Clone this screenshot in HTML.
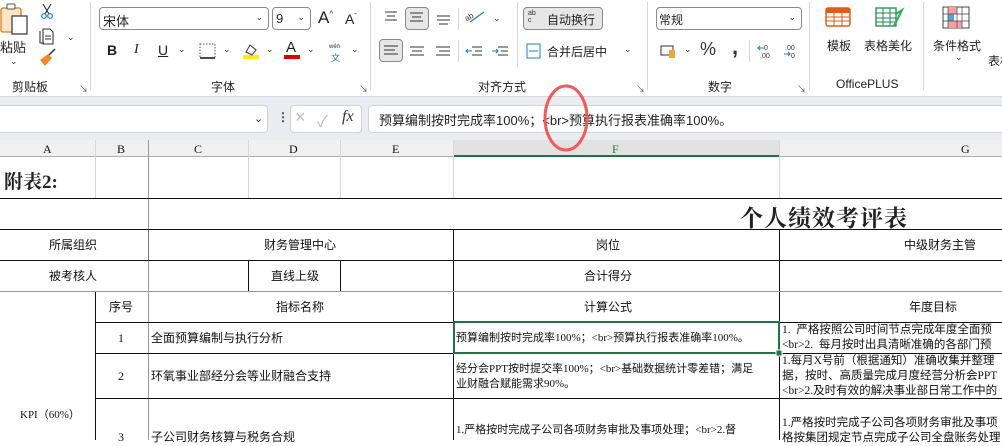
<!DOCTYPE html>
<html><head><meta charset="utf-8"><style>
*{margin:0;padding:0;box-sizing:border-box}
body{width:1002px;height:440px;overflow:hidden;background:#fff;position:relative;font-family:"Liberation Sans","Noto Sans CJK SC",sans-serif;color:#222}
.a{position:absolute;white-space:nowrap}
.ui{font-size:12px;color:#222}
.c{font-family:"Liberation Serif","Noto Sans CJK SC",sans-serif;font-size:12px;color:#111;line-height:14px}
.box{position:absolute;border:1px solid #8a8a8a;border-radius:4px;background:#fff}
.pr{position:absolute;border:1px solid #8a8a8a;border-radius:4px;background:#e6e6e6}
.sep{position:absolute;width:1px;background:#d8d8d8}
.chev{position:absolute;font-size:9px;color:#333}
</style></head><body>
<!-- ribbon -->
<div class="a" style="left:0;top:0;width:1002px;height:96px;background:#fff"></div>
<svg class="a" style="left:0;top:0" width="1002" height="96">
 <!-- paste -->
 <rect x="1" y="8" width="20" height="24" rx="2" fill="#fbe6c8" stroke="#e07b1a" stroke-width="1.3"/>
 <rect x="7" y="4" width="8" height="5" rx="1" fill="#fff" stroke="#555"/>
 <rect x="12" y="16" width="15" height="18" fill="#fff" stroke="#333" stroke-width="1.2"/>
 <!-- scissors -->
 <path d="M43 4 L49 14 M51 4 L45 14" stroke="#333" stroke-width="1.2" fill="none"/>
 <circle cx="44" cy="16" r="2.3" fill="none" stroke="#1a7fd0" stroke-width="1.2"/><circle cx="50" cy="16" r="2.3" fill="none" stroke="#1a7fd0" stroke-width="1.2"/>
 <!-- copy -->
 <path d="M40 31 V43 H44 M43 29 H50 L53 32 V44 H43 Z" stroke="#333" stroke-width="1.1" fill="none"/>
 <path d="M45 36 H51 M45 39 H51" stroke="#333"/>
 <!-- brush -->
 <path d="M40 60 L48 54 L52 58 L45 66 Z" fill="#f08a24"/><path d="M49 55 L55 49" stroke="#333" stroke-width="1.5"/>
 <!-- font group -->
 <path d="M200 44 H215 V58 H200 Z" stroke="#555" stroke-dasharray="1.5 1.5" fill="none"/><path d="M200 58 H215" stroke="#111" stroke-width="1.5"/>
 <rect x="243" y="55" width="16" height="4" fill="#ffee00"/>
 <path d="M246 52 L250 45 L256 50 L252 55 Z" fill="none" stroke="#333"/>
 <rect x="284" y="55" width="16" height="4" fill="#e00000"/>
 <!-- align icons row1 -->
 <g stroke="#333" stroke-width="1">
 <path d="M385 12 H397 M387 16 H395 M385 20 H397"/>
 <path d="M410 15 H423 M412 19 H421 M410 23 H423"/>
 <path d="M437 22 H450 M439 26 H448 M437 18 H450" transform="translate(0,-2)"/>
 <path d="M384 47 H398 M384 51 H395 M384 55 H398"/>
 <path d="M410 47 H424 M412 51 H422 M410 55 H424"/>
 <path d="M436 47 H450 M439 51 H450 M436 55 H450"/>
 <path d="M472 47 H482 M475 51 H482 M472 55 H482"/><path d="M498 47 H508 M501 51 H508 M498 55 H508"/>
 </g>
 <path d="M466 51 H472 M468 49 L466 51 L468 53" stroke="#1a7fd0" fill="none"/>
 <path d="M492 51 H498 M496 49 L498 51 L496 53" stroke="#1a7fd0" fill="none"/>
 <path d="M470 22 L484 12" stroke="#1a7fd0" stroke-width="1.3"/>
 <text x="464" y="20" font-size="8" fill="#333" transform="rotate(-30 468 16)">ab</text>
 <rect x="527" y="44" width="13" height="14" fill="none" stroke="#1a7fd0"/><path d="M529 51 H538" stroke="#1a7fd0"/>
 <!-- number icons -->
 <rect x="661" y="46" width="12" height="9" fill="none" stroke="#333"/><rect x="669" y="50" width="6" height="8" fill="#f3a33a"/>
 <path d="M758 48 H764 M760 46 L758 48 L760 50" stroke="#1a7fd0" fill="none"/>
 <path d="M784 54 H790 M788 52 L790 54 L788 56" stroke="#1a7fd0" fill="none"/>
 <text x="764" y="50" font-size="7" fill="#333">0</text><text x="760" y="58" font-size="7" fill="#333">.00</text>
 <text x="785" y="50" font-size="7" fill="#333">.00</text><text x="791" y="58" font-size="7" fill="#333">0</text>
 <!-- officeplus icons -->
 <rect x="826" y="8" width="24" height="18" rx="2" fill="#fff" stroke="#e35b1c" stroke-width="1.5"/><rect x="826" y="8" width="24" height="5" fill="#e35b1c"/>
 <path d="M826 17 H850 M826 21 H850 M834 13 V26 M842 13 V26" stroke="#e35b1c"/>
 <rect x="876" y="8" width="20" height="18" fill="#fff" stroke="#1e8a4c" stroke-width="1.3"/>
 <path d="M876 13 H896 M876 18 H896 M876 22 H896 M883 8 V26 M890 8 V26" stroke="#1e8a4c"/><path d="M896 14 L902 10 L894 26" stroke="#2fae5c" stroke-width="2" fill="none"/>
 <rect x="943" y="7" width="26" height="21" fill="#fff" stroke="#444"/>
 <rect x="948" y="7" width="9" height="7" fill="#f5a0a0"/><rect x="948" y="14" width="6" height="7" fill="#5aa0e0"/><rect x="948" y="21" width="14" height="7" fill="#f5a0a0"/>
 <path d="M943 14 H969 M943 21 H969 M948 7 V28 M957 7 V28 M962 7 V28" stroke="#444" stroke-width=".7"/>
</svg>
<div class="a ui" style="left:0;top:37px;font-size:13px">粘贴</div>
<div class="chev" style="left:10px;top:56px">⌄</div>
<div class="chev" style="left:67px;top:32px">⌄</div>
<div class="a ui" style="left:12px;top:78px;font-size:12px">剪贴板</div>
<div class="a" style="left:79px;top:82px;font-size:9px;color:#555">↘</div>
<div class="sep" style="left:90px;top:2px;height:88px"></div>
<div class="box" style="left:99px;top:7px;width:170px;height:23px"><span class="a ui" style="left:3px;top:3px;font-size:13px">宋体</span><span class="chev" style="right:5px;top:4px">⌄</span></div>
<div class="box" style="left:272px;top:7px;width:39px;height:23px"><span class="a ui" style="left:3px;top:3px;font-size:13px">9</span><span class="chev" style="right:5px;top:4px">⌄</span></div>
<div class="a ui" style="left:318px;top:8px;font-size:17px">A<sup style="font-size:8px">^</sup></div>
<div class="a ui" style="left:345px;top:11px;font-size:14px">A<sup style="font-size:7px">ˇ</sup></div>
<div class="a" style="left:107px;top:42px;font-size:14px;font-weight:bold">B</div>
<div class="a" style="left:134px;top:42px;font-size:14px;font-style:italic;font-family:'Liberation Serif'">I</div>
<div class="a" style="left:158px;top:42px;font-size:14px;text-decoration:underline">U</div>
<div class="chev" style="left:178px;top:44px">⌄</div><div class="chev" style="left:223px;top:44px">⌄</div>
<div class="chev" style="left:266px;top:44px">⌄</div><div class="chev" style="left:307px;top:44px">⌄</div><div class="chev" style="left:351px;top:44px">⌄</div>
<div class="a" style="left:286px;top:39px;font-size:15px">A</div>
<div class="a" style="left:329px;top:44px;font-size:6px;color:#333">wén</div><div class="a" style="left:331px;top:51px;font-size:9px;color:#1a7fd0">文</div>
<div class="a ui" style="left:211px;top:78px">字体</div>
<div class="a" style="left:359px;top:82px;font-size:9px;color:#555">↘</div>
<div class="sep" style="left:370px;top:2px;height:88px"></div>
<div class="pr" style="left:405px;top:7px;width:24px;height:23px"></div>
<div class="pr" style="left:379px;top:39px;width:24px;height:23px"></div>
<svg class="a" style="left:0;top:0" width="1002" height="96" pointer-events="none"><g stroke="#333"><path d="M410 13 H423 M412 17 H421 M410 21 H423"/><path d="M384 46 H398 M384 50 H395 M384 54 H398"/></g></svg>
<div class="chev" style="left:493px;top:13px">⌄</div>
<div class="sep" style="left:458px;top:8px;height:22px"></div><div class="sep" style="left:458px;top:40px;height:22px"></div>
<div class="sep" style="left:517px;top:2px;height:65px"></div>
<div class="pr" style="left:523px;top:7px;width:80px;height:23px"><span class="a" style="left:4px;top:2px;font-size:7px;line-height:7px;color:#333">ab<br>c</span><span class="a ui" style="left:23px;top:3px;font-size:12px">自动换行</span></div>
<div class="a ui" style="left:547px;top:43px">合并后居中</div>
<div class="chev" style="left:624px;top:44px">⌄</div>
<div class="a ui" style="left:478px;top:78px">对齐方式</div>
<div class="a" style="left:636px;top:82px;font-size:9px;color:#555">↘</div>
<div class="sep" style="left:647px;top:2px;height:88px"></div>
<div class="box" style="left:656px;top:7px;width:146px;height:23px"><span class="a ui" style="left:2px;top:3px;font-size:12px">常规</span><span class="chev" style="right:5px;top:4px">⌄</span></div>
<div class="chev" style="left:684px;top:44px">⌄</div>
<div class="a" style="left:700px;top:39px;font-size:18px;color:#333">%</div>
<div class="a" style="left:732px;top:34px;font-size:22px;font-weight:bold;color:#333">,</div>
<div class="sep" style="left:749px;top:40px;height:22px"></div>
<div class="a ui" style="left:708px;top:78px">数字</div>
<div class="a" style="left:797px;top:82px;font-size:9px;color:#555">↘</div>
<div class="sep" style="left:809px;top:2px;height:88px"></div>
<div class="a ui" style="left:827px;top:37px;font-size:12px">模板</div>
<div class="a ui" style="left:864px;top:37px;font-size:12px">表格美化</div>
<div class="a ui" style="left:836px;top:77px;font-size:12px">OfficePLUS</div>
<div class="sep" style="left:923px;top:2px;height:88px"></div>
<div class="a ui" style="left:933px;top:37px">条件格式</div>
<div class="chev" style="left:955px;top:52px">⌄</div>
<div class="a ui" style="left:988px;top:52px">表格</div>
<!-- formula bar band -->
<div class="a" style="left:0;top:96px;width:1002px;height:44px;background:#e9edf1;border-top:1px solid #d6dade"></div>
<div class="a" style="left:-4px;top:105px;width:272px;height:28px;background:#fff;border:1px solid #d0d4d8;border-radius:4px"></div>
<div class="chev" style="left:254px;top:112px;font-size:11px">⌄</div>
<div class="a" style="left:277px;top:110px;font-size:12px;color:#444;font-weight:bold">⋮</div>
<div class="a" style="left:290px;top:105px;width:72px;height:28px;background:#fff;border:1px solid #d0d4d8;border-radius:4px"></div>
<div class="a" style="left:295px;top:107px;font-size:18px;color:#bbb">×</div>
<div class="a" style="left:317px;top:108px;font-size:16px;color:#bbb">✓</div>
<div class="a" style="left:342px;top:108px;font-size:16px;font-style:italic;font-family:'Liberation Serif';color:#333">fx</div>
<div class="a" style="left:368px;top:105px;width:640px;height:28px;background:#fff;border:1px solid #d0d4d8;border-radius:4px"></div>
<div class="a" style="left:379px;top:110px;font-size:13px;color:#222">预算编制按时完成率100%；&lt;br&gt;预算执行报表准确率100%。</div>
<!-- column headers -->
<div class="a" style="left:0;top:140px;width:1002px;height:17px;background:#f0f0f0;border-bottom:1px solid #b0b0b0"></div>
<div class="a" style="left:453px;top:140px;width:326px;height:17px;background:#e2e2e2;border-bottom:2px solid #217346"></div>
<div class="a c" style="left:43px;top:142px">A</div><div class="a c" style="left:117px;top:142px">B</div>
<div class="a c" style="left:194px;top:142px">C</div><div class="a c" style="left:289px;top:142px">D</div>
<div class="a c" style="left:392px;top:142px">E</div><div class="a c" style="left:612px;top:142px;color:#217346">F</div>
<div class="a c" style="left:961px;top:142px">G</div>
<!-- grid -->
<svg class="a" style="left:0;top:140px" width="1002" height="300">
 <g stroke="#d8d8d8" stroke-width="1">
  <path d="M95.5 0 V17 M248.5 0 V17 M340.5 0 V17 M453.5 0 V17 M779.5 0 V17"/>
  <path d="M95.5 17 V58 M248.5 17 V58 M340.5 17 V58 M453.5 17 V58 M779.5 17 V58"/>
 </g>
 <path d="M148.5 0 V89 M148.5 120 V300" stroke="#999"/>
 <path d="M148.5 89 V120" stroke="#777"/>
 <g stroke="#111" stroke-width="1">
  <path d="M0 58.5 H1002 M0 89.5 H1002 M0 120.5 H1002"/>
  <path d="M453.5 89 V300 M779.5 89 V300 M248.5 120 V151 M340.5 120 V151"/>
  <path d="M95.5 151 V300 M95 182.5 H1002 M95 213.5 H1002 M95 258.5 H1002"/>
 </g>
 <path d="M0 151.5 H1002" stroke="#999"/>
 <rect x="454" y="182" width="325" height="31" fill="none" stroke="#217346" stroke-width="2"/>
 <rect x="776" y="210" width="6" height="6" fill="#217346" stroke="#fff"/>
</svg>
<!-- cell texts -->
<div class="a" style="left:4px;top:167px;font-size:19px;font-weight:bold;font-family:'Liberation Serif','Noto Serif CJK SC',serif">附表2:</div>
<div class="a" style="left:740px;top:200px;font-size:23px;font-weight:bold;font-family:'Liberation Serif','Noto Serif CJK SC',serif;letter-spacing:1px">个人绩效考评表</div>
<div class="a c" style="left:49px;top:238px">所属组织</div>
<div class="a c" style="left:264px;top:238px">财务管理中心</div>
<div class="a c" style="left:596px;top:238px">岗位</div>
<div class="a c" style="left:904px;top:238px">中级财务主管</div>
<div class="a c" style="left:49px;top:269px">被考核人</div>
<div class="a c" style="left:271px;top:269px">直线上级</div>
<div class="a c" style="left:584px;top:269px">合计得分</div>
<div class="a c" style="left:109px;top:300px">序号</div>
<div class="a c" style="left:276px;top:300px">指标名称</div>
<div class="a c" style="left:584px;top:300px">计算公式</div>
<div class="a c" style="left:909px;top:300px">年度目标</div>
<div class="a c" style="left:118px;top:331px">1</div>
<div class="a c" style="left:151px;top:331px">全面预算编制与执行分析</div>
<div class="a c" style="left:456px;top:331px;font-size:11px">预算编制按时完成率100%；&lt;br&gt;预算执行报表准确率100%。</div>
<div class="a c" style="left:782px;top:323px;font-size:11.5px;line-height:15px">1.&nbsp; 严格按照公司时间节点完成年度全面预<br>&lt;br&gt;2.&nbsp; 每月按时出具清晰准确的各部门预</div>
<div class="a c" style="left:118px;top:369px">2</div>
<div class="a c" style="left:151px;top:369px">环氧事业部经分会等业财融合支持</div>
<div class="a c" style="left:456px;top:362px;font-size:11px;line-height:15px">经分会PPT按时提交率100%；&lt;br&gt;基础数据统计零差错；满足<br>业财融合赋能需求90%。</div>
<div class="a c" style="left:782px;top:354px;font-size:11.5px;line-height:15px">1.每月X号前（根据通知）准确收集并整理<br>据，按时、高质量完成月度经营分析会PPT<br>&lt;br&gt;2.及时有效的解决事业部日常工作中的</div>
<div class="a c" style="left:20px;top:408px;font-size:11px">KPI（60%）</div>
<div class="a c" style="left:118px;top:430px">3</div>
<div class="a c" style="left:151px;top:430px">子公司财务核算与税务合规</div>
<div class="a c" style="left:456px;top:423px;font-size:11px">1.严格按时完成子公司各项财务审批及事项处理；&lt;br&gt;2.督</div>
<div class="a c" style="left:782px;top:416px;font-size:11.5px;line-height:15px">1.严格按时完成子公司各项财务审批及事项<br>格按集团规定节点完成子公司全盘账务处理</div>
<!-- red annotation -->
<svg class="a" style="left:0;top:0" width="1002" height="440"><ellipse cx="566" cy="118" rx="21" ry="32" fill="none" stroke="#f25a5a" stroke-width="3"/></svg>
</body></html>
